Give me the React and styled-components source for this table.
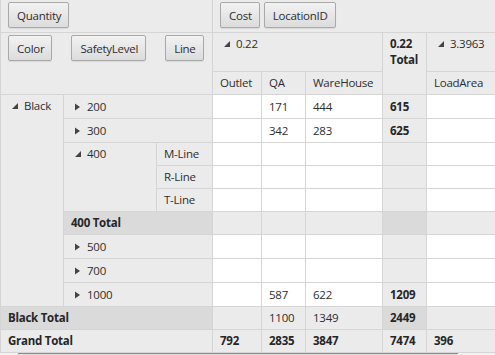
import React from 'react'
import styled, { createGlobalStyle } from 'styled-components'

const GlobalStyle = createGlobalStyle`
  html, body {
    margin: 0;
    padding: 0;
    background: #ffffff;
    overflow: hidden;
  }
`

const LINE = '#d5d5d5'
const HEAD = '#ebebeb'
const SUB = '#dadada'

const Wrapper = styled.div`
  width: 495px;
  height: 355px;
  overflow: hidden;
  font-family: "Open Sans", "Noto Sans", sans-serif;
  font-size: 11.5px;
  letter-spacing: -0.25px;
  color: #2e2e2e;
`

const Grid = styled.div`
  display: grid;
  grid-template-columns: 62px 92px 55px 48px 43px 76px 43px 80px;
  grid-template-rows: 32px 38px 22px 23px 23px 22px 22px 22px 22px 23px 23px 23px 22px 22px;
  gap: 1px;
  padding: 0 0 1px 1px;
  background: ${LINE};
  width: max-content;
`

const Cell = styled.div`
  grid-column: ${p => p.$col};
  grid-row: ${p => p.$row};
  background: ${p => p.$bg || '#fff'};
  font-weight: ${p => (p.$bold ? 700 : 400)};
  color: ${p => (p.$bold ? '#262626' : '#2e2e2e')};
  display: flex;
  align-items: ${p => (p.$top ? 'flex-start' : 'center')};
  padding: ${p => (p.$top ? '3px' : '0')} 0 0 7px;
  line-height: 16px;
  white-space: nowrap;
  overflow: hidden;
`

const Drop = styled.div`
  grid-column: ${p => p.$col};
  grid-row: ${p => p.$row};
  background: ${HEAD};
  display: flex;
  align-items: flex-start;
  gap: ${p => p.$gap}px;
  padding: 2px 0 0 7px;
`

const FieldBtn = styled.div`
  height: 24px;
  padding: 0 7px 0 8px;
  display: flex;
  align-items: center;
  border: 1px solid #a9a9a9;
  border-radius: 2px;
  background: linear-gradient(#f2f2f2, #dcdcdc);
  box-shadow: 0 1px 1px rgba(0, 0, 0, 0.08);
  color: #2e2e2e;
  white-space: nowrap;
`

const Toggle = styled.span`
  width: 16px;
  flex: none;
  display: flex;
  align-items: center;
  height: 16px;
  svg {
    display: block;
    fill: #444;
  }
`

const Stack = styled.div`
  display: flex;
  flex-direction: column;
`

const Scrollbar = styled.div`
  height: 2px;
  background: #f0f0f0;
`

const Thumb = styled.div`
  margin-left: 18px;
  width: 440px;
  height: 2px;
  border-top: 1px solid #8f8f8f;
  background: #dcdcdc;
  box-sizing: border-box;
`

function Expanded() {
  return (
    <Toggle>
      <svg width="8" height="8" viewBox="0 0 8 8" style={{ marginLeft: 2 }}>
        <polygon points="8,1 8,7 2,7" />
      </svg>
    </Toggle>
  )
}

function Collapsed() {
  return (
    <Toggle>
      <svg width="5" height="8" viewBox="0 0 5 8" style={{ marginLeft: 4 }}>
        <polygon points="0,0.5 5,4 0,7.5" />
      </svg>
    </Toggle>
  )
}

// measure columns: Outlet, QA, WareHouse, 0.22 Total, LoadArea
const rows = [
  { row: 4, vals: ['', '171', '444', '615', ''] },
  { row: 5, vals: ['', '342', '283', '625', ''] },
  { row: 6, vals: ['', '', '', '', ''] },
  { row: 7, vals: ['', '', '', '', ''] },
  { row: 8, vals: ['', '', '', '', ''] },
  { row: 9, vals: ['', '', '', '', ''], sub: true },
  { row: 10, vals: ['', '', '', '', ''] },
  { row: 11, vals: ['', '', '', '', ''] },
  { row: 12, vals: ['', '587', '622', '1209', ''] },
  { row: 13, vals: ['', '1100', '1349', '2449', ''], sub: true },
  { row: 14, vals: ['792', '2835', '3847', '7474', '396'], grand: true },
]

function cellBg(r, i) {
  if (r.grand) return HEAD
  if (i === 3) return r.sub ? SUB : HEAD
  return r.sub ? HEAD : '#fff'
}

function App() {
  return (
    <Wrapper>
      <GlobalStyle />
      <Grid>
        <Drop $col="1 / 4" $row="1" $gap={0}>
          <FieldBtn>Quantity</FieldBtn>
        </Drop>
        <Drop $col="4 / 9" $row="1" $gap={4}>
          <FieldBtn>Cost</FieldBtn>
          <FieldBtn>LocationID</FieldBtn>
        </Drop>

        <Drop $col="1 / 4" $row="2 / 4" $gap={19}>
          <FieldBtn>Color</FieldBtn>
          <FieldBtn>SafetyLevel</FieldBtn>
          <FieldBtn>Line</FieldBtn>
        </Drop>

        <Cell $col="4 / 7" $row="2" $bg={HEAD} $top><Expanded />0.22</Cell>
        <Cell $col="7" $row="2 / 4" $bg={HEAD} $top $bold>
          <Stack><span>0.22</span><span>Total</span></Stack>
        </Cell>
        <Cell $col="8" $row="2" $bg={HEAD} $top><Expanded />3.3963</Cell>
        <Cell $col="4" $row="3" $bg={HEAD}>Outlet</Cell>
        <Cell $col="5" $row="3" $bg={HEAD}>QA</Cell>
        <Cell $col="6" $row="3" $bg={HEAD}>WareHouse</Cell>
        <Cell $col="8" $row="3" $bg={HEAD}>LoadArea</Cell>

        <Cell $col="1" $row="4 / 13" $bg={HEAD} $top><Expanded />Black</Cell>
        <Cell $col="2 / 4" $row="4" $bg={HEAD}><Collapsed />200</Cell>
        <Cell $col="2 / 4" $row="5" $bg={HEAD}><Collapsed />300</Cell>
        <Cell $col="2" $row="6 / 9" $bg={HEAD} $top><Expanded />400</Cell>
        <Cell $col="3" $row="6" $bg={HEAD}>M-Line</Cell>
        <Cell $col="3" $row="7" $bg={HEAD}>R-Line</Cell>
        <Cell $col="3" $row="8" $bg={HEAD}>T-Line</Cell>
        <Cell $col="2 / 4" $row="9" $bg={SUB} $bold>400 Total</Cell>
        <Cell $col="2 / 4" $row="10" $bg={HEAD}><Collapsed />500</Cell>
        <Cell $col="2 / 4" $row="11" $bg={HEAD}><Collapsed />700</Cell>
        <Cell $col="2 / 4" $row="12" $bg={HEAD}><Collapsed />1000</Cell>
        <Cell $col="1 / 4" $row="13" $bg={SUB} $bold>Black Total</Cell>
        <Cell $col="1 / 4" $row="14" $bg={HEAD} $bold>Grand Total</Cell>

        {rows.map(r =>
          r.vals.map((v, i) => (
            <Cell
              key={`${r.row}-${i}`}
              $col={`${i + 4}`}
              $row={`${r.row}`}
              $bg={cellBg(r, i)}
              $bold={r.grand || i === 3}
            >
              {v}
            </Cell>
          ))
        )}
      </Grid>
      <Scrollbar>
        <Thumb />
      </Scrollbar>
    </Wrapper>
  )
}

export default App
